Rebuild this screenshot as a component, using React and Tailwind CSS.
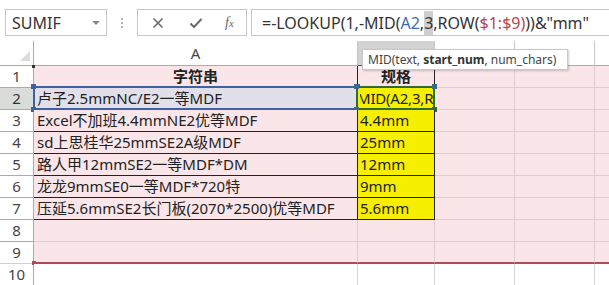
import React from "react";

const rows = [
  { a: "字符串", b: "规格" },
  { a: "卢子2.5mmNC/E2一等MDF", b: "MID(A2,3,R" },
  { a: "Excel不加班4.4mmNE2优等MDF", b: "4.4mm" },
  { a: "sd上思桂华25mmSE2A级MDF", b: "25mm" },
  { a: "路人甲12mmSE2一等MDF*DM", b: "12mm" },
  { a: "龙龙9mmSE0一等MDF*720特", b: "9mm" },
  { a: "压延5.6mmSE2长门板(2070*2500)优等MDF", b: "5.6mm" },
  { a: "", b: "" },
  { a: "", b: "" },
  { a: "", b: "" },
];

const cellFont = { fontFamily: '"Noto Sans", "Noto Sans CJK SC", sans-serif' };

function Handle({ pos, color }) {
  return <div className={"absolute w-[5px] h-[5px] " + pos + " " + color} />;
}

export default function App() {
  return (
    <div className="relative w-[609px] h-[285px] overflow-hidden bg-white text-[#222]" style={cellFont}>
      {/* formula bar */}
      <div className="flex items-start h-[41px] pt-[9px]">
        <div className="ml-[5px] w-[102px] h-[27px] border border-[#c6c6c6] flex items-center justify-between pl-[6px] pr-[6px]">
          <span className="text-[16px] text-[#333]">SUMIF</span>
          <span className="w-0 h-0 border-l-[4px] border-r-[4px] border-t-[4px] border-l-transparent border-r-transparent border-t-[#8a8a8a]" />
        </div>
        <div className="w-[30px] h-[27px] flex flex-col items-center justify-center gap-[2px]">
          <span className="w-[2px] h-[2px] bg-[#b5b5b5]" />
          <span className="w-[2px] h-[2px] bg-[#b5b5b5]" />
          <span className="w-[2px] h-[2px] bg-[#b5b5b5]" />
        </div>
        <div className="w-[110px] h-[27px] border border-[#c6c6c6] flex items-center text-[#6a6a6a]">
          <svg className="ml-[14px]" width="12" height="12" viewBox="0 0 12 12">
            <path d="M1.5 1.5 L10.5 10.5 M10.5 1.5 L1.5 10.5" stroke="#6a6a6a" strokeWidth="1.6" />
          </svg>
          <svg className="ml-[25px]" width="14" height="12" viewBox="0 0 14 12">
            <path d="M1.5 6.5 L5 10 L12.5 2" stroke="#6a6a6a" strokeWidth="2" fill="none" />
          </svg>
          <span className="ml-[22px] text-[14px] italic text-[#666]" style={{ fontFamily: '"Liberation Serif", serif' }}>
            f<span className="text-[11px]">x</span>
          </span>
        </div>
        <div className="ml-[4px] flex-1 h-[27px] border-y border-l border-[#c6c6c6] flex items-center pl-[10px] text-[16px] text-[#333] whitespace-nowrap">
          <span>=-LOOKUP(1,-MID(</span>
          <span className="text-[#3c6bb3]">A2</span>
          <span>,</span>
          <span className="bg-[#cfcfcf]">3</span>
          <span>,ROW(</span>
          <span className="text-[#b8434f]">$1:$9</span>
          <span className="text-[#b8434f]">)</span>
          <span>))&amp;"mm"</span>
        </div>
      </div>

      {/* sheet */}
      <div className="grid grid-cols-[34px_324px_77px_80px_80px_1fr] grid-rows-[25px_repeat(10,22px)]">
        {/* header row */}
        <div className="relative border-r border-b border-[#ababab]">
          <span className="absolute right-[3px] bottom-[4px] w-0 h-0 border-b-[10px] border-l-[10px] border-b-[#dcdcdc] border-l-transparent" />
        </div>
        <div className="border-r border-b border-[#c6c6c6] border-b-[#ababab] flex items-center justify-center text-[15px] text-[#444]">A</div>
        <div className="border-r border-b border-[#c6c6c6] border-b-[#217346] bg-[#d2d2d2]" />
        <div className="border-r border-b border-[#c6c6c6] border-b-[#ababab]" />
        <div className="border-r border-b border-[#c6c6c6] border-b-[#ababab]" />
        <div className="border-b border-[#ababab]" />

        {rows.map((r, i) => {
          const n = i + 1;
          const inTable = n <= 7;
          const pink = n <= 9;
          const redLine = n === 9;
          const rowHead =
            "border-r border-b border-[#ababab] flex items-center justify-center text-[15px] " +
            (n === 2 ? "bg-[#d9dcd9] text-[#333] border-r-[#217346]" : "text-[#444]") +
            (redLine ? " border-b-[#d0d0d0]" : "");
          const base = pink ? "bg-[#fae6e9]" : "bg-white";
          const gridLine = pink ? "border-[#dccdd1]" : "border-[#d6d6d6]";
          const bottom = redLine ? " border-b-2 border-b-[#b0475a]" : "";
          return (
            <React.Fragment key={n}>
              <div className={rowHead}>{n}</div>

              {/* column A */}
              <div
                className={
                  "relative flex items-center whitespace-nowrap text-[15px] border-r border-b " +
                  (inTable ? "border-[#222] " : gridLine + " ") +
                  (n === 2 ? "bg-[#e1e0ea] " : base + " ") +
                  (n === 1 ? "justify-center font-bold " : "pl-[3px] ") +
                  bottom
                }
              >
                {r.a}
                {n === 1 && <div className="absolute -left-[2px] -top-[1px] w-[3px] h-[3px] bg-[#333]" />}
                {n === 9 && <div className="absolute -left-[2px] -bottom-[3px] w-[4px] h-[4px] bg-[#b0475a]" />}
                {n === 2 && (
                  <>
                    <div className="absolute -left-[1px] -top-[2px] right-[-1px] bottom-[-1px] border-2 border-[#42609f]" />
                    <Handle pos="-left-[3px] -top-[4px]" color="bg-[#42609f]" />
                    <Handle pos="-right-[3px] -top-[4px]" color="bg-[#42609f]" />
                    <Handle pos="-left-[3px] -bottom-[3px]" color="bg-[#42609f]" />
                    <Handle pos="-right-[3px] -bottom-[3px]" color="bg-[#42609f]" />
                  </>
                )}
              </div>

              {/* column B */}
              <div
                className={
                  "relative flex items-center whitespace-nowrap text-[15px] border-r border-b " +
                  (inTable ? "border-[#222] " : gridLine + " ") +
                  (n >= 2 && n <= 7 ? "bg-[#f7ef00] " : base + " ") +
                  (n === 1 ? "justify-center font-bold " : "pl-[2px] ") +
                  bottom
                }
              >
                {n === 2 ? (
                  <>
                    <div className="w-full overflow-hidden">
                      <span className="block -ml-[3px] tracking-[-0.2px]">{r.b}</span>
                    </div>
                    <div className="absolute -left-[2px] -top-[2px] -right-[1px] -bottom-[1px] border-2 border-[#2e6b3c]" />
                    <Handle pos="-left-[4px] -top-[4px]" color="bg-[#3d6a86]" />
                    <Handle pos="-right-[3px] -top-[4px]" color="bg-[#3d6a86]" />
                    <Handle pos="-left-[4px] -bottom-[3px]" color="bg-[#3d6a86]" />
                    <Handle pos="-right-[3px] -bottom-[3px]" color="bg-[#2e6b3c]" />
                  </>
                ) : (
                  r.b
                )}
              </div>

              <div className={"border-r border-b " + gridLine + " " + base + bottom} />
              <div className={"border-r border-b " + gridLine + " " + base + bottom} />
              <div className={"border-b " + gridLine + " " + base + bottom} />
            </React.Fragment>
          );
        })}
      </div>

      {/* function tooltip */}
      <div className="absolute left-[362px] top-[49px] w-[206px] h-[21px] bg-white border border-[#c8c8c8] shadow-[1px_1px_2px_rgba(0,0,0,0.2)] flex items-center pl-[5px] text-[12px] text-[#444] whitespace-pre">
        <span>MID(text, </span>
        <span className="font-bold text-[#333]">start_num</span>
        <span>, num_chars)</span>
      </div>
    </div>
  );
}
